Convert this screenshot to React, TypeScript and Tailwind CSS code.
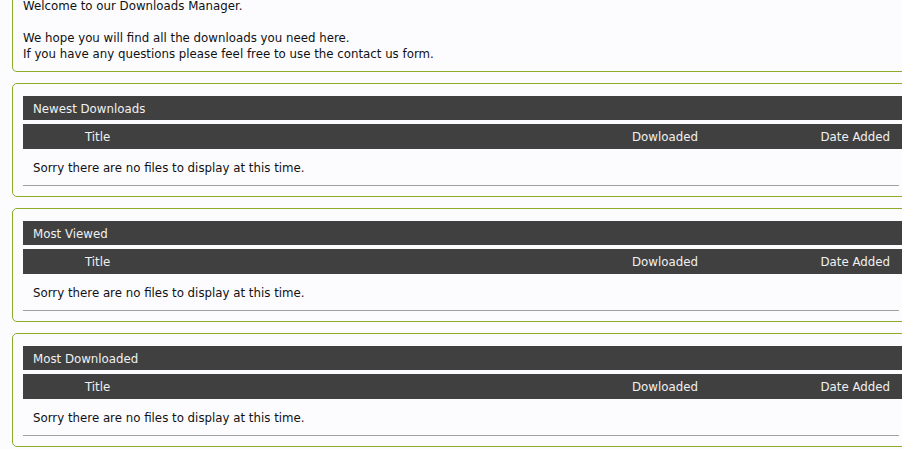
const sections = ['Newest Downloads', 'Most Viewed', 'Most Downloaded'];

function Box({ children, top = false }: { children: React.ReactNode; top?: boolean }) {
  return (
    <div
      className={
        'ml-[12px] w-[900px] border border-[#8cab2a] bg-[#fcfcff] ' +
        (top ? 'rounded-bl-[5px] border-t-0' : 'rounded-l-[5px]')
      }
    >
      {children}
    </div>
  );
}

function DownloadTable({ title }: { title: string }) {
  return (
    <div className="w-[890px] pt-[12px] pb-[10px] pl-[10px]">
      <div className="flex h-[24px] items-center bg-[#404040] pl-[10px] pt-[2px] text-[#f0f0f0]">{title}</div>
      <div className="mt-[4px] grid h-[25px] grid-cols-[609px_1fr_auto] items-center bg-[#404040] pr-[13px] pt-[2px] text-[#f0f0f0]">
        <div className="pl-[62px]">Title</div>
        <div>Dowloaded</div>
        <div>Date Added</div>
      </div>
      <div className="flex h-[36px] items-center pl-[10px] pt-[2px]">Sorry there are no files to display at this time.</div>
      <div className="h-px w-[876px] bg-[#a0a0a0]" />
    </div>
  );
}

export default function App() {
  return (
    <div
      className="h-[449px] w-[902px] overflow-hidden bg-[#fcfcff] text-[11.8px] leading-[15px] text-[#111]"
      style={{ fontFamily: '"DejaVu Sans", Verdana, sans-serif' }}
    >
      <Box top>
        <div className="pl-[10px] pb-[9px] leading-[16px]">
          <p className="-mt-[2px]">Welcome to our Downloads Manager.</p>
          <p className="mt-[16px]">We hope you will find all the downloads you need here.</p>
          <p>If you have any questions please feel free to use the contact us form.</p>
        </div>
      </Box>
      {sections.map((s) => (
        <div key={s} className="mt-[11px]">
          <Box>
            <DownloadTable title={s} />
          </Box>
        </div>
      ))}
    </div>
  );
}
